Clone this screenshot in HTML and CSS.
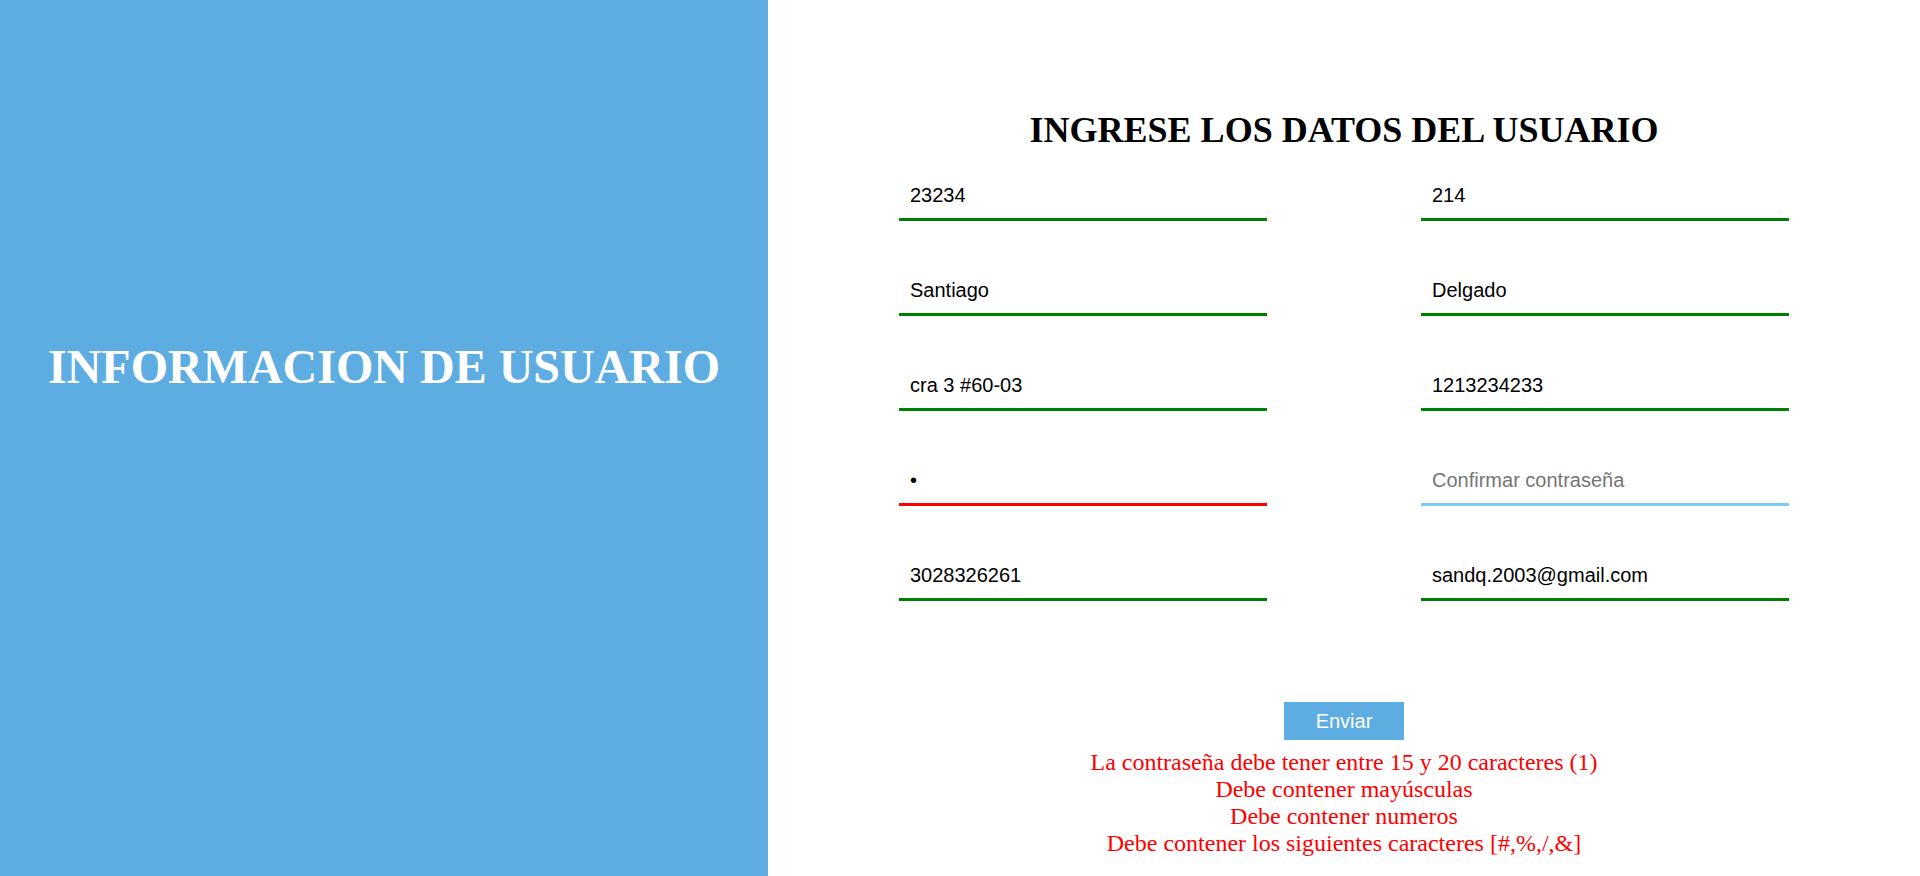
FILE: index.html
```html
<!DOCTYPE html>
<html lang="es">
<head>
<meta charset="utf-8">
<title>Informacion de usuario</title>
<link rel="stylesheet" href="styles.css">
</head>
<body>
<div class="page">
  <aside class="side">
    <h1 class="side-title">INFORMACION DE USUARIO</h1>
  </aside>
  <main class="main">
    <h2 class="form-title">INGRESE LOS DATOS DEL USUARIO</h2>
    <form class="form" onsubmit="return false">
      <div class="grid">
        <input class="field ok" type="text" value="23234">
        <input class="field ok" type="text" value="214">
        <input class="field ok" type="text" value="Santiago">
        <input class="field ok" type="text" value="Delgado">
        <input class="field ok" type="text" value="cra 3 #60-03">
        <input class="field ok" type="text" value="1213234233">
        <input class="field bad" type="password" value="1">
        <input class="field empty" type="password" placeholder="Confirmar contraseña">
        <input class="field ok" type="text" value="3028326261">
        <input class="field ok" type="text" value="sandq.2003@gmail.com">
      </div>
      <div class="actions">
        <button class="send" type="submit">Enviar</button>
      </div>
      <div class="errors">
        <div>La contraseña debe tener entre 15 y 20 caracteres (1)</div>
        <div>Debe contener mayúsculas</div>
        <div>Debe contener numeros</div>
        <div>Debe contener los siguientes caracteres [#,%,/,&amp;]</div>
      </div>
    </form>
  </main>
</div>
</body>
</html>
```

FILE: styles.css
```css
html, body {
  margin: 0;
  padding: 0;
  background: #ffffff;
}

.page {
  display: flex;
  min-height: 876px;
  font-family: "Liberation Serif", "Times New Roman", serif;
}

.side {
  flex: 0 0 768px;
  background: #5dade2;
  padding-top: 339px;
  box-sizing: border-box;
}

.side-title {
  margin: 0;
  color: #ffffff;
  font-size: 48px;
  line-height: 56px;
  font-weight: bold;
  text-align: center;
}

.main {
  flex: 1;
  padding-top: 109px;
}

.form-title {
  margin: 0;
  font-size: 36px;
  line-height: 42px;
  font-weight: bold;
  text-align: center;
  color: #000000;
}

.form {
  margin-top: 26px;
}

.grid {
  display: grid;
  grid-template-columns: 368px 368px;
  column-gap: 154px;
  row-gap: 51px;
  justify-content: center;
}

.field {
  box-sizing: border-box;
  width: 100%;
  height: 44px;
  margin: 0;
  padding: 0 11px 4px 11px;
  border: none;
  border-bottom: 3px solid #008000;
  outline: none;
  background: transparent;
  font-family: "Liberation Sans", Arial, sans-serif;
  font-size: 20px;
  color: #000000;
}

.field.bad {
  border-bottom-color: #ff0000;
}

.field.empty {
  border-bottom-color: #7ccbf5;
}

.field::placeholder {
  color: #757575;
}

.actions {
  margin-top: 101px;
  display: flex;
  justify-content: center;
}

.send {
  width: 120px;
  height: 38px;
  border: none;
  background: #5dade2;
  color: #ffffff;
  font-family: "Liberation Sans", Arial, sans-serif;
  font-size: 20px;
  padding: 0;
}

.errors {
  margin-top: 9px;
  color: #ff0000;
  font-size: 24px;
  line-height: 27px;
  text-align: center;
}
```
